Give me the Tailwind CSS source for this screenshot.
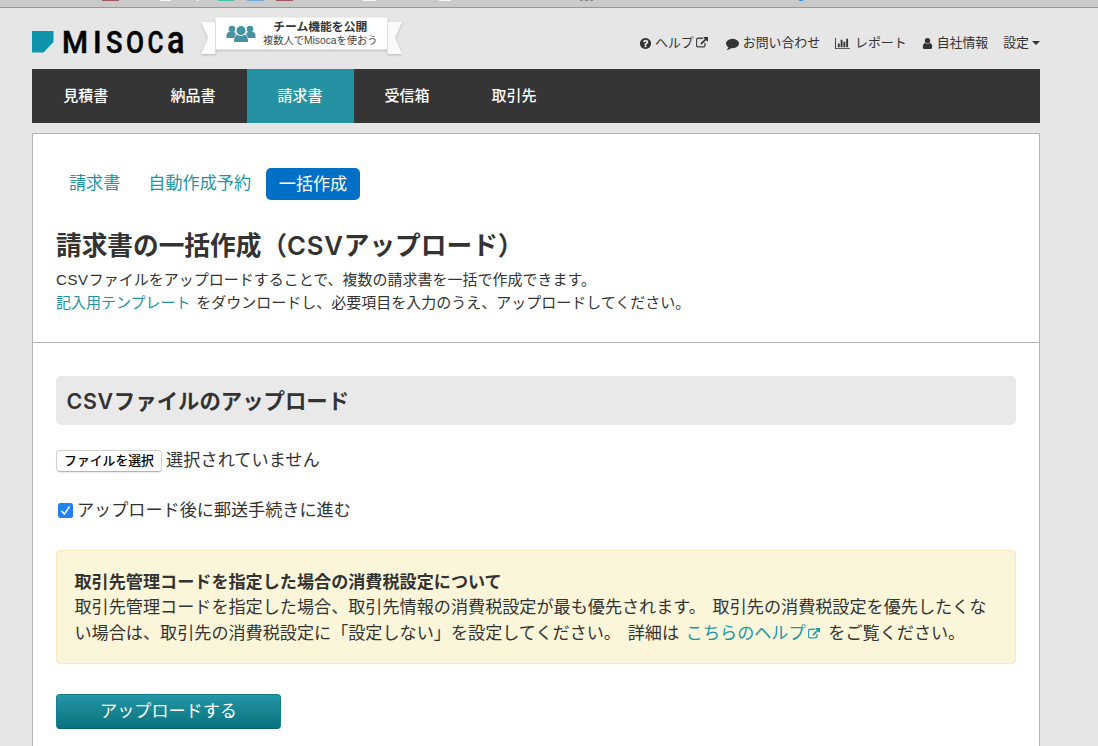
<!DOCTYPE html>
<html lang="ja">
<head>
<meta charset="utf-8">
<title>請求書の一括作成 - Misoca</title>
<script src="https://cdn.jsdelivr.net/npm/@tailwindcss/browser@4"></script>
</head>
<body class="h-[746px] overflow-hidden bg-[#e6e6e6] font-['Liberation_Sans','Noto_Sans_CJK_JP',sans-serif] text-[17.12px] text-[#333]">
<svg width="0" height="0" class="hidden">
  <symbol id="ext" viewBox="0 0 1792 1792"><path stroke="currentColor" stroke-width="50" d="M1408 928v320q0 119-84.5 203.5t-203.5 84.5h-832q-119 0-203.5-84.5t-84.5-203.5v-832q0-119 84.5-203.5t203.5-84.5h704q14 0 23 9t9 23v64q0 14-9 23t-23 9h-704q-66 0-113 47t-47 113v832q0 66 47 113t113 47h832q66 0 113-47t47-113v-320q0-14 9-23t23-9h64q14 0 23 9t9 23zm384-864v512q0 26-19 45t-45 19-45-19l-176-176-652 652q-10 10-23 10t-23-10l-114-114q-10-10-10-23t10-23l652-652-176-176q-19-19-19-45t19-45 45-19h512q26 0 45 19t19 45z"/></symbol>
</svg>

<!-- browser toolbar edge -->
<div class="h-2 border-b border-[#999] bg-[#cacaca]">
  <svg class="block" width="1098" height="7">
    <rect x="102" width="17" height="1" fill="#9c5a64"/><rect x="160" width="11" height="1" fill="#f5f5f5"/><rect x="196" width="3" height="1" fill="#e8e8e8"/>
    <rect x="218" width="16" height="1" fill="#45c3a5"/><rect x="247" width="17" height="1" fill="#72aed8"/><rect x="276" width="17" height="1" fill="#9c5a64"/>
    <rect x="363" width="13" height="1" fill="#f5f5f5"/><rect x="439" width="12" height="1" fill="#f5f5f5"/>
    <path d="M580 .5h15" stroke="#888" stroke-dasharray="3 2"/><rect x="799" width="4" height="1" fill="#3b8ddb"/>
  </svg>
</div>

<div class="ml-8 w-[1008px]">
  <header class="flex h-[61px] items-start">
    <svg class="mt-[14px] shrink-0 overflow-visible" width="160" height="36" viewBox="0 0 160 36">
      <path d="M0 9h21.500v11l-10 10.500H0z" fill="#0f95ab"/>
      <g font-family="Roboto" font-weight="500" font-size="30.500" fill="#000" stroke="#000" stroke-width=".5">
        <text x="30" y="30.500" textLength="26" lengthAdjust="spacingAndGlyphs">M</text>
        <text x="61" y="30.500">I</text>
        <text x="74" y="30.500" textLength="16.500" lengthAdjust="spacingAndGlyphs">S</text>
        <text x="94" y="30.500" textLength="18" lengthAdjust="spacingAndGlyphs">O</text>
        <text x="115.500" y="30.500" textLength="16" lengthAdjust="spacingAndGlyphs">C</text>
        <text x="135" y="30.500" font-size="39" textLength="17.500" lengthAdjust="spacingAndGlyphs">a</text>
      </g>
    </svg>
    <div class="relative mt-[7px] ml-2 h-[42px] w-[204px] shrink-0">
      <svg class="absolute inset-0 drop-shadow-[0_1px_1px_rgba(0,0,0,0.2)]" width="204" height="42" viewBox="0 0 204 42">
        <path d="M1 7h14v32H1l7-16zM188 7h14l-7 16 7 16h-14z" fill="#fbfbfb"/>
        <path d="M15.500 2.500h172v32h-172z" fill="#fff"/>
        <path d="M15.500 7v32M187.500 7v32" stroke="#ddd"/>
      </svg>
      <div class="absolute top-[2px] left-[26px] flex items-start">
        <svg class="mt-[8px]" width="30" height="18" viewBox="0 0 30 18" fill="#4792a3">
          <circle cx="6" cy="4" r="3.300"/><circle cx="24" cy="4" r="3.300"/>
          <path d="M.5 13V11q0-4 3-4h4q1.500 0 2.500 1.500L8 13zM29.500 13V11q0-4-3-4h-4q-1.500 0-2.500 1.500l2 4.500z"/>
          <path d="M8 16q0-6 4-6.500h6q4 .5 4 6.500v1H8z"/><circle cx="15" cy="5.500" r="5" stroke="#fff"/>
        </svg>
        <div class="ml-[7px] text-center whitespace-nowrap">
          <div class="mt-[2px] text-[11.800px] leading-[16px] font-bold text-[#333]">チーム機能を公開</div>
          <div class="text-[10.250px] leading-[12px] text-[#444]">複数人でMisocaを使おう</div>
        </div>
      </div>
    </div>
    <nav class="mt-[25px] ml-auto flex items-center text-[12.900px] leading-5 whitespace-nowrap">
      <a class="flex items-center"><svg class="mr-[3px] size-[13px]" viewBox="0 0 1792 1792" fill="currentColor"><path d="M1024 1376v-192q0-14-9-23t-23-9h-192q-14 0-23 9t-9 23v192q0 14 9 23t23 9h192q14 0 23-9t9-23zm256-672q0-88-55.500-163t-138.500-116-170-41q-243 0-371 213-15 24 8 42l132 100q7 6 19 6 16 0 25-12 53-68 86-92 34-24 86-24 48 0 85.500 26t37.500 59q0 38-20 61t-68 45q-63 28-115.500 86.500t-52.500 125.500v36q0 14 9 23t23 9h192q14 0 23-9t9-23q0-19 21.500-49.500t54.500-49.500q32-18 49-28.500t46-35 44.500-48 28-60.500 12.500-81zm384 192q0 209-103 385.500t-279.500 279.500-385.500 103-385.500-103-279.500-279.500-103-385.500 103-385.500 279.500-279.500 385.500-103 385.500 103 279.500 279.500 103 385.500z"/></svg>ヘルプ<svg class="ml-[2px] size-[12px]" fill="currentColor"><use href="#ext"/></svg></a>
      <a class="ml-[18px] flex items-center"><svg class="mr-1 size-[13px]" viewBox="0 0 1792 1792" fill="currentColor"><path d="M1792 896q0 174-120 321.500t-326 233-450 85.500q-70 0-145-8-198 175-460 242-49 14-114 22-17 2-30.500-9t-17.500-29v-1q-3-4-.5-12t2-10 4.500-9.500l6-9 7-8.500 8-9q7-8 31-34.500t34.500-38 31-39.500 32.500-51 27-59 26-76q-157-89-247.500-220t-90.500-281q0-130 71-248.500t191-204.500 286-136.500 348-50.500q244 0 450 85.500t326 233 120 321.500z"/></svg>お問い合わせ</a>
      <a class="ml-[15px] flex items-center"><svg class="mr-[5px] h-[13px] w-[15px]" viewBox="0 0 2048 1792" fill="currentColor"><path d="M640 896v512h-256v-512h256zm384-512v1024h-256v-1024h256zm1024 1152v128h-2048v-1536h128v1408h1920zm-640-896v768h-256v-768h256zm384-384v1152h-256v-1152h256z"/></svg>レポート</a>
      <a class="ml-[14px] flex items-center"><svg class="mr-[3px] size-[13px]" viewBox="0 0 1792 1792" fill="currentColor"><path d="M1536 1399q0 109-62.500 187t-150.500 78h-854q-88 0-150.500-78t-62.500-187q0-85 8.500-160.500t31.500-152 58.500-131 94-89 134.500-34.500q131 128 313 128t313-128q76 0 134.500 34.500t94 89 58.500 131 31.500 152 8.500 160.500zm-256-887q0 159-112.500 271.500t-271.500 112.500-271.500-112.500-112.500-271.500 112.500-271.500 271.500-112.500 271.500 112.500 112.500 271.500z"/></svg>自社情報</a>
      <a class="ml-[15px] flex items-center">設定<svg class="ml-[3px] h-1 w-2" viewBox="0 0 8 4" fill="currentColor"><path d="M0 0h8L4 4z"/></svg></a>
    </nav>
  </header>

  <nav class="flex h-[54px] bg-[#353535] text-[15px] leading-[53px] font-medium text-white">
    <a class="w-[107.500px] text-center">見積書</a>
    <a class="w-[107px] text-center">納品書</a>
    <a class="w-[107px] bg-[#2492a2] text-center">請求書</a>
    <a class="w-[107px] text-center">受信箱</a>
    <a class="w-[107px] text-center">取引先</a>
  </nav>

  <main class="mt-[10px] h-[640px] border border-[#b3b3b3] bg-white">
    <section class="h-[208.500px] border-b border-[#b3b3b3] px-[23px] pt-[33.500px]">
      <div class="flex h-8 items-center leading-[34px] text-[#2196a3]">
        <a class="ml-[13px]">請求書</a>
        <a class="ml-[28px]">自動作成予約</a>
        <a class="ml-[15px] h-8 w-[94px] rounded-[5px] bg-[#0070c6] text-center text-white">一括作成</a>
      </div>
      <h1 class="mt-[27px] text-[25.680px] leading-[38px] font-bold">請求書の一括作成（<span class="font-['Inter'] font-semibold tracking-[0.8px]">CSV</span>アップロード）</h1>
      <p class="mt-[4.500px] text-[15px] leading-[22.500px] whitespace-nowrap [word-spacing:1.500px]"><span class="tracking-[0.6px]">CSV</span>ファイルをアップロードすることで、複数の請求書を一括で作成できます。<br><a class="text-[#2196a3]">記入用テンプレート</a> をダウンロードし、必要項目を入力のうえ、アップロードしてください。</p>
    </section>
    <section class="px-[23px] pt-[33px]">
      <h2 class="h-[49px] w-[960px] rounded-[5px] bg-[#e9e9e9] pl-[10.500px] text-[21.400px] leading-[51px] font-bold"><span class="font-['Inter'] font-semibold tracking-[0.7px]">CSV</span>ファイルのアップロード</h2>
      <div class="mt-[22px] flex h-[26px] items-center leading-[26px]">
        <button class="mt-[2px] h-[22px] w-[106px] rounded-[4px] border border-[#d0d0d0] border-b-[#b5b5b5] bg-white text-[12.840px] leading-[19px] font-medium whitespace-nowrap text-black shadow-[0_1px_1px_rgba(0,0,0,0.08)]">ファイルを選択</button>
        <span class="ml-1 pt-[2px] tracking-[0.1px]">選択されていません</span>
      </div>
      <label class="mt-[24px] flex h-[26px] items-center leading-[26px]">
        <svg class="mt-[2px] mr-[4px] ml-[2px]" width="15" height="15" viewBox="0 0 15 15"><rect width="15" height="15" rx="2.500" fill="#2180fb"/><path d="M3.800 8.200l2.600 2.900L11.200 4" fill="none" stroke="#fff" stroke-width="1.500" stroke-linecap="round" stroke-linejoin="round"/></svg>
        <span class="pt-[2px]">アップロード後に郵送手続きに進む</span>
      </label>
      <div class="mt-[27.500px] h-[114px] w-[960px] rounded-[4px] border border-[#f8e9c3] bg-[#fbf6da] px-[17.500px] pt-[18.500px] leading-[25.680px] whitespace-nowrap [word-spacing:2px]">
        <strong class="block font-bold">取引先管理コードを指定した場合の消費税設定について</strong>
        取引先管理コードを指定した場合、取引先情報の消費税設定が最も優先されます。 取引先の消費税設定を優先したくな<br>い場合は、取引先の消費税設定に「設定しない」を設定してください。 詳細は <a class="text-[#2196a3]">こちらのヘルプ<svg class="mr-[2px] ml-[2px] inline size-[12px] align-[-1px]" fill="currentColor"><use href="#ext"/></svg></a> をご覧ください。
      </div>
      <button class="mt-[30px] h-[35px] w-[225px] rounded-[4px] border border-[#12808d] border-b-[#07666f] bg-linear-to-b from-[#2496a5] to-[#06737e] leading-[34px] text-white">アップロードする</button>
    </section>
  </main>
</div>
</body>
</html>
